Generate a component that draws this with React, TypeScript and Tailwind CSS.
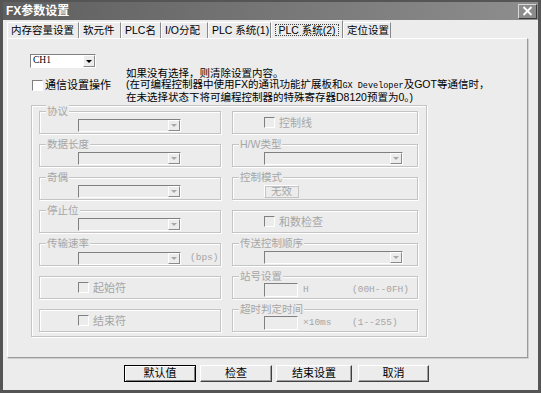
import type { ReactNode } from "react";

const sunken = "border border-t-[#808080] border-l-[#808080] border-b-white border-r-white";
const etched = "border border-[#c4c4c4] shadow-[inset_1px_1px_0_#fff,1px_1px_0_#fff]";
const dim = "text-[#a6a6a6]";

function Combo({ w, enabled = false, text }: { w: string; enabled?: boolean; text?: string }) {
    return (
        <div className={`${w} h-[13px] flex ${sunken} ${enabled ? "bg-white" : "bg-[#ececec]"}`}>
            <div className="flex-1 pl-[2px] text-[9.5px] leading-[11px] font-['Liberation_Serif',serif]">{text}</div>
            <div className="w-[12px] flex items-center justify-center bg-[#ececec] border border-t-white border-l-white border-b-[#8a8a8a] border-r-[#8a8a8a]">
                <div className={`w-0 h-0 border-x-[3px] border-x-transparent border-t-[3px] ${enabled ? "border-t-black" : "border-t-[#a8a8a8]"}`} />
            </div>
        </div>
    );
}

function Check({ label, enabled = false }: { label: string; enabled?: boolean }) {
    return (
        <div className="flex items-center">
            <div className={`w-[11px] h-[11px] ${sunken} ${enabled ? "bg-white" : "bg-[#ececec]"}`} />
            <span className={`ml-[4px] text-[11px] leading-[12px] ${enabled ? "text-black" : dim}`}>{label}</span>
        </div>
    );
}

function Group({ label, children, className = "" }: { label?: string; children?: ReactNode; className?: string }) {
    return (
        <div className={`relative h-[23px] shrink-0 ${etched} ${className}`}>
            {label && (
                <span className={`absolute -top-[7px] left-[6px] px-[1px] bg-[#ececec] text-[10.5px] leading-[12px] ${dim}`}>
                    {label}
                </span>
            )}
            {children}
        </div>
    );
}

function Btn({ label, w, primary = false }: { label: string; w: string; primary?: boolean }) {
    return (
        <div
            className={`${w} h-[17px] flex items-center justify-center text-[11px] text-black bg-[#ececec] ${
                primary
                    ? "border border-black shadow-[inset_1px_1px_0_#fff,inset_-1px_-1px_0_#808080]"
                    : "border border-t-white border-l-white border-b-[#404040] border-r-[#404040] shadow-[inset_-1px_-1px_0_#a0a0a0]"
            }`}
        >
            {label}
        </div>
    );
}

const tabs = [
    { label: "内存容量设置", w: "w-[72px]" },
    { label: "软元件", w: "w-[42px]" },
    { label: "PLC名", w: "w-[40px]" },
    { label: "I/O分配", w: "w-[47px]" },
    { label: "PLC 系统(1)", w: "w-[63px]" },
    { label: "PLC 系统(2)", w: "w-[72px]", active: true },
    { label: "定位设置", w: "w-[48px]" },
];

export default function App() {
    return (
        <div className="w-[541px] h-[393px] bg-[#555] px-[3px] pt-[2px] pb-[3px] flex flex-col font-['Liberation_Sans','Noto_Sans_CJK_SC',sans-serif]">
            {/* Title bar */}
            <div className="h-[18px] shrink-0 flex items-center justify-between pl-[3px] pr-[1px] bg-gradient-to-r from-[#5f5f5f] to-[#8e8e8e]">
                <span className="text-white font-bold text-[12px] leading-[14px]">FX参数设置</span>
                <div className="w-[19px] h-[15px] bg-[#8c8c8c] border border-t-[#d8d8d8] border-l-[#d8d8d8] border-b-[#3c3c3c] border-r-[#3c3c3c] flex items-center justify-center">
                    <svg width="11" height="10" viewBox="0 0 11 10">
                        <path d="M1.5 1 L9.5 9 M9.5 1 L1.5 9" stroke="#fff" strokeWidth="1.8" />
                    </svg>
                </div>
            </div>

            <div className="flex-1 bg-[#ececec] flex flex-col">
                {/* Tabs */}
                <div className="h-[18px] shrink-0 flex items-end pl-[4px]">
                    {tabs.map((t) =>
                        t.active ? (
                            <div key={t.label} className={`${t.w} h-[18px] flex items-center justify-center border-t border-l border-white border-r border-r-[#8a8a8a]`}>
                                <span className="border border-dotted border-[#444] px-[2px] text-[10.5px] leading-[10px] text-black">{t.label}</span>
                            </div>
                        ) : (
                            <div key={t.label} className={`${t.w} h-[16px] flex items-center pl-[3px] border-t border-l border-white border-r border-r-[#8a8a8a] text-[10.5px] text-black`}>
                                {t.label}
                            </div>
                        )
                    )}
                </div>

                {/* Panel */}
                <div className="ml-[4px] w-[521px] h-[320px] shrink-0 border border-t-white border-l-white border-r-[#9a9a9a] border-b-[#9a9a9a] shadow-[1px_1px_0_#cfcfcf] flex flex-col">
                    <div className="h-[66px] shrink-0 flex">
                        <div className="w-[118px] pl-[22px] pt-[15px] flex flex-col">
                            <Combo w="w-[66px] h-[14px]" enabled text="CH1" />
                            <div className="mt-[11px] pl-[2px] flex items-center">
                                <div className={`w-[11px] h-[11px] bg-white ${sunken}`} />
                                <span className="ml-[2px] text-[11px] leading-[12px] text-black">通信设置操作</span>
                            </div>
                        </div>
                        <div className="pt-[29px] text-[10.5px] leading-[11px] text-black whitespace-nowrap">
                            <div>如果没有选择，则清除设置内容。</div>
                            <div>
                                (在可编程控制器中使用FX的通讯功能扩展板和<span className="font-['Liberation_Mono',monospace] text-[8.5px]">GX Developer</span>及GOT等通信时，
                            </div>
                            <div>在未选择状态下将可编程控制器的特殊寄存器D8120预置为0。)</div>
                        </div>
                    </div>

                    {/* Settings group */}
                    <div className={`ml-[23px] w-[396px] h-[232px] pt-[5px] pl-[7px] flex gap-[11px] ${etched}`}>
                        <div className="w-[182px] flex flex-col gap-[10px]">
                            <Group label="协议">
                                <div className="ml-[38px] mt-[7px]"><Combo w="w-[103px]" /></div>
                            </Group>
                            <Group label="数据长度">
                                <div className="ml-[38px] mt-[7px]"><Combo w="w-[103px]" /></div>
                            </Group>
                            <Group label="奇偶">
                                <div className="ml-[38px] mt-[7px]"><Combo w="w-[103px]" /></div>
                            </Group>
                            <Group label="停止位">
                                <div className="ml-[38px] mt-[7px]"><Combo w="w-[103px]" /></div>
                            </Group>
                            <Group label="传输速率">
                                <div className="ml-[38px] mt-[7px] flex items-center">
                                    <Combo w="w-[103px]" />
                                    <span className={`ml-[9px] text-[9.5px] font-['Liberation_Mono',monospace] ${dim}`}>(bps)</span>
                                </div>
                            </Group>
                            <Group>
                                <div className="h-full pl-[38px] flex items-center"><Check label="起始符" /></div>
                            </Group>
                            <Group>
                                <div className="h-full pl-[38px] flex items-center"><Check label="结束符" /></div>
                            </Group>
                        </div>

                        <div className="w-[186px] flex flex-col gap-[10px]">
                            <Group>
                                <div className="h-full pl-[31px] flex items-center"><Check label="控制线" /></div>
                            </Group>
                            <Group label="H/W类型">
                                <div className="ml-[31px] mt-[7px]"><Combo w="w-[139px]" /></div>
                            </Group>
                            <Group label="控制模式">
                                <div className={`ml-[31px] mt-[7px] w-[35px] h-[13px] flex items-center justify-center text-[10.5px] leading-[11px] border border-t-white border-l-white border-b-[#c4c4c4] border-r-[#c4c4c4] shadow-[inset_1px_1px_0_#c4c4c4] ${dim}`}>
                                    无效
                                </div>
                            </Group>
                            <Group>
                                <div className="h-full pl-[31px] flex items-center"><Check label="和数检查" /></div>
                            </Group>
                            <Group label="传送控制顺序">
                                <div className="ml-[31px] mt-[7px]"><Combo w="w-[139px]" /></div>
                            </Group>
                            <Group label="站号设置">
                                <div className={`ml-[31px] mt-[6px] flex items-center text-[9.5px] font-['Liberation_Mono',monospace] ${dim}`}>
                                    <div className={`w-[34px] h-[14px] ${sunken}`} />
                                    <span className="ml-[5px] w-[49px]">H</span>
                                    <span>(00H--0FH)</span>
                                </div>
                            </Group>
                            <Group label="超时判定时间">
                                <div className={`ml-[31px] mt-[6px] flex items-center text-[9.5px] font-['Liberation_Mono',monospace] ${dim}`}>
                                    <div className={`w-[34px] h-[14px] ${sunken}`} />
                                    <span className="ml-[5px] w-[49px]">×10ms</span>
                                    <span>(1--255)</span>
                                </div>
                            </Group>
                        </div>
                    </div>
                </div>

                {/* Buttons */}
                <div className="mt-[7px] ml-[121px] flex">
                    <Btn label="默认值" w="w-[72px]" primary />
                    <div className="ml-[4px]"><Btn label="检查" w="w-[72px]" /></div>
                    <div className="ml-[4px]"><Btn label="结束设置" w="w-[76px]" /></div>
                    <div className="ml-[6px]"><Btn label="取消" w="w-[71px]" /></div>
                </div>
            </div>
        </div>
    );
}
